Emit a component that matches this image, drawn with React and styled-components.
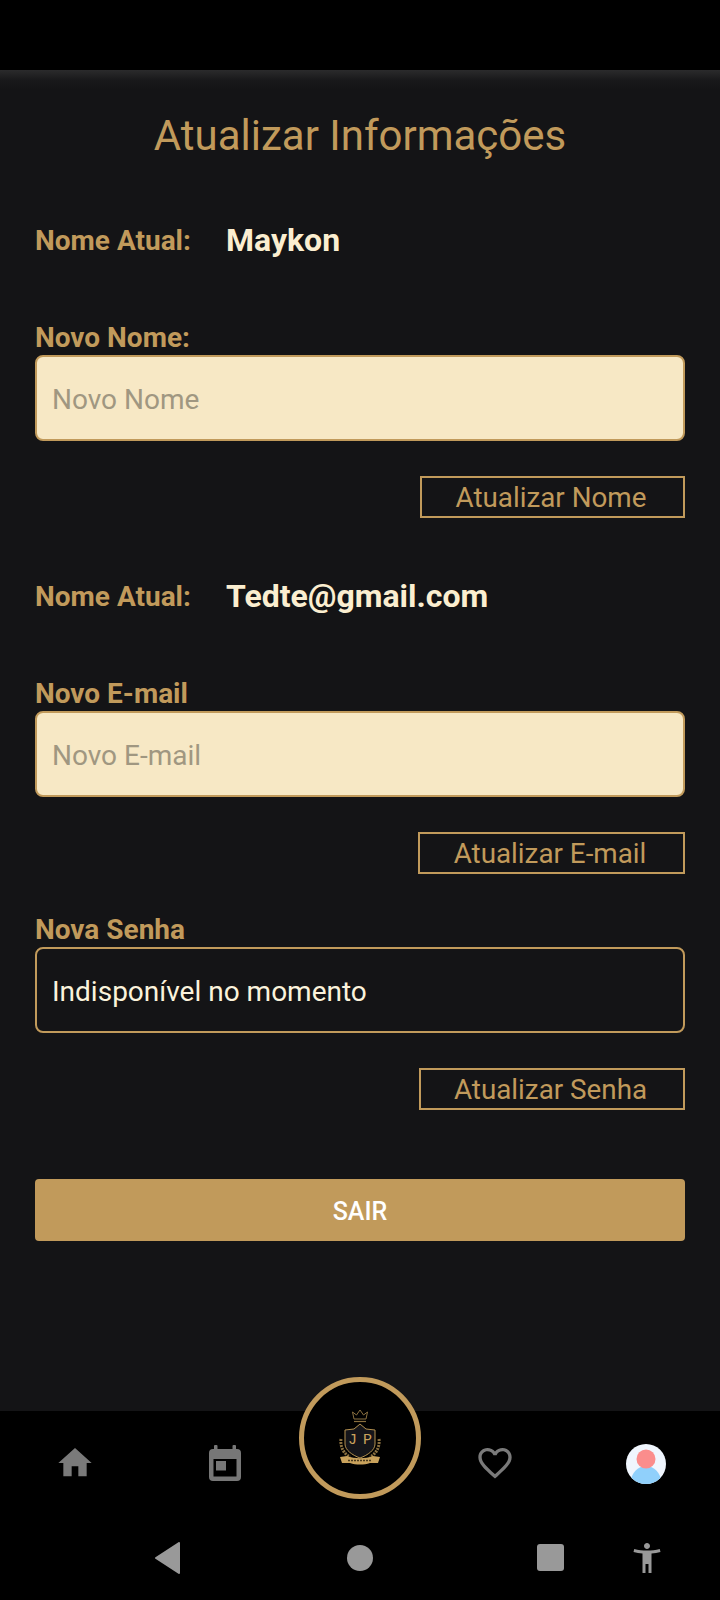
import React from "react";
import styled, { createGlobalStyle } from "styled-components";
import { MdHome, MdFavoriteBorder, MdAccessibilityNew } from "react-icons/md";

const GOLD = "#c19a5b";

export default function App() {
  return (
    <>
      <GlobalStyle />
      <Screen>
        <StatusBar />
        <Content>
          <Title>Atualizar Informações</Title>

          <CurrentRow>
            <CurrentLabel>Nome Atual:</CurrentLabel>
            <CurrentValue>Maykon</CurrentValue>
          </CurrentRow>
          <FieldLabel $top={61}>Novo Nome:</FieldLabel>
          <Input placeholder="Novo Nome" />
          <ButtonRow>
            <OutlineButton $width={265}>Atualizar Nome</OutlineButton>
          </ButtonRow>

          <CurrentRow $top={58}>
            <CurrentLabel>Nome Atual:</CurrentLabel>
            <CurrentValue>Tedte@gmail.com</CurrentValue>
          </CurrentRow>
          <FieldLabel $top={61}>Novo E-mail</FieldLabel>
          <Input placeholder="Novo E-mail" />
          <ButtonRow>
            <OutlineButton $width={267}>Atualizar E-mail</OutlineButton>
          </ButtonRow>

          <FieldLabel $top={39}>Nova Senha</FieldLabel>
          <Input $dark defaultValue="Indisponível no momento" readOnly />
          <ButtonRow>
            <OutlineButton $width={266}>Atualizar Senha</OutlineButton>
          </ButtonRow>

          <LogoutButton>SAIR</LogoutButton>
        </Content>

        <TabBar>
          <Tab>
            <MdHome size={40} />
          </Tab>
          <Tab>
            <CalendarIcon />
          </Tab>
          <CenterBadge>
            <Crest />
          </CenterBadge>
          <Tab>
            <MdFavoriteBorder size={40} />
          </Tab>
          <AvatarTab>
            <Avatar />
          </AvatarTab>
        </TabBar>

        <SystemBar>
          <BackKey viewBox="0 0 26 32">
            <path d="M25 1 L25 31 L2 16 Z" fill="#999" stroke="#999" strokeWidth="2" strokeLinejoin="round" />
          </BackKey>
          <HomeDot />
          <SquareKey />
          <AccessIcon>
            <MdAccessibilityNew size={36} />
          </AccessIcon>
        </SystemBar>
      </Screen>
    </>
  );
}

function CalendarIcon() {
  return (
    <svg width="32" height="36" viewBox="0 0 32 36" fill="#777">
      <rect x="5" y="0" width="3.5" height="6" rx="1" />
      <rect x="23.5" y="0" width="3.5" height="6" rx="1" />
      <path
        fillRule="evenodd"
        d="M4 4 H28 A4 4 0 0 1 32 8 V32 A4 4 0 0 1 28 36 H4 A4 4 0 0 1 0 32 V8 A4 4 0 0 1 4 4 Z M4.5 14 V31.5 H27.5 V14 Z"
      />
      <rect x="7" y="16" width="10" height="9.5" />
    </svg>
  );
}

function Crest() {
  return (
    <svg width="46" height="58" viewBox="0 0 46 58">
      <path d="M17 10 L15.5 3 L19.5 6 L23 1 L26.5 6 L30.5 3 L29 10 Z" fill="none" stroke="#8a7040" strokeWidth="1" />
      <path d="M17 12.5 H29" stroke="#8a7040" strokeWidth="1.2" />
      <path d="M4 30 C3 38 7 45 13 48 M42 30 C43 38 39 45 33 48" fill="none" stroke="#8a7040" strokeWidth="3" strokeDasharray="2 1" />
      <path d="M23 15 L29 20 L38 21 V35 C38 41 31 46 23 49 C15 46 8 41 8 35 V21 L17 20 Z" fill="#15151a" stroke="#b3904f" strokeWidth="1" />
      <path d="M3 48 L10 47 C18 50 28 50 36 47 L43 48 L41 54 L33 54 C27 56 19 56 13 54 L5 54 Z" fill="#c9a25c" />
      <path d="M11 51.5 H35" stroke="#4a3a1c" strokeWidth="1.5" strokeDasharray="2 1" />
      <text x="15.5" y="35" fontSize="15" fill="#c9a25c" textAnchor="middle" fontFamily="Liberation Mono, monospace">J</text>
      <text x="30.5" y="35" fontSize="15" fill="#c9a25c" textAnchor="middle" fontFamily="Liberation Mono, monospace">P</text>
    </svg>
  );
}

function Avatar() {
  return (
    <svg width="40" height="40" viewBox="0 0 40 40">
      <defs>
        <clipPath id="avatarClip">
          <circle cx="20" cy="20" r="20" />
        </clipPath>
      </defs>
      <circle cx="20" cy="20" r="20" fill="#f0f6fe" />
      <g clipPath="url(#avatarClip)">
        <ellipse cx="20" cy="38" rx="15" ry="16" fill="#90d0fb" />
        <circle cx="20" cy="15" r="9.5" fill="#fb8d8c" />
      </g>
    </svg>
  );
}

const GlobalStyle = createGlobalStyle`
  html, body {
    margin: 0;
    padding: 0;
    background: #000;
  }
  * {
    box-sizing: border-box;
  }
`;

const Screen = styled.div`
  width: 720px;
  height: 1600px;
  display: flex;
  flex-direction: column;
  font-family: Roboto, "Liberation Sans", sans-serif;
  background: #000;
`;

const StatusBar = styled.div`
  height: 70px;
  background: #000;
  flex-shrink: 0;
`;

const Content = styled.div`
  height: 1341px;
  background: linear-gradient(#2b2b2c, #19191b 10px, #141416 20px);
  padding: 42px 35px 0;
  display: flex;
  flex-direction: column;
`;

const Title = styled.h1`
  margin: 0;
  text-align: center;
  color: ${GOLD};
  font-size: 42px;
  font-weight: 400;
  line-height: 48px;
`;

const CurrentRow = styled.div`
  display: flex;
  align-items: center;
  margin-top: ${(p) => p.$top ?? 60}px;
  height: 40px;
`;

const CurrentLabel = styled.span`
  width: 191px;
  color: ${GOLD};
  font-size: 28px;
  font-weight: 700;
  white-space: nowrap;
`;

const CurrentValue = styled.span`
  color: #fbeed0;
  font-size: 32px;
  font-weight: 700;
`;

const FieldLabel = styled.label`
  margin-top: ${(p) => p.$top}px;
  color: ${GOLD};
  font-size: 28px;
  font-weight: 700;
  line-height: 34px;
`;

const Input = styled.input`
  width: 100%;
  height: 86px;
  padding: 3px 15px 0;
  border: 2px solid ${GOLD};
  border-radius: 8px;
  outline: none;
  background: ${(p) => (p.$dark ? "transparent" : "#f7e8c5")};
  color: #fbf3dc;
  font-family: inherit;
  font-size: 28px;

  &::placeholder {
    color: #a09781;
    opacity: 1;
  }
`;

const ButtonRow = styled.div`
  display: flex;
  justify-content: flex-end;
  margin-top: 35px;
`;

const OutlineButton = styled.button`
  width: ${(p) => p.$width}px;
  height: 42px;
  padding: 0 3px 0 0;
  border: 2px solid ${GOLD};
  background: transparent;
  color: ${GOLD};
  font-family: inherit;
  font-size: 27.8px;
`;

const LogoutButton = styled.button`
  width: 100%;
  height: 62px;
  margin-top: 69px;
  padding: 2px 0 0;
  border: none;
  border-radius: 4px;
  background: ${GOLD};
  color: #fff;
  font-family: inherit;
  font-size: 25px;
  font-weight: 500;
`;

const TabBar = styled.nav`
  height: 104px;
  display: grid;
  grid-template-columns: 150px 150px 120px 150px 1fr;
  align-items: center;
  background: #000;
  flex-shrink: 0;
`;

const Tab = styled.div`
  display: flex;
  justify-content: center;
  color: #7a7a7a;
`;

const AvatarTab = styled(Tab)`
  padding: 2px 0 0 2px;
`;

const CenterBadge = styled.div`
  width: 122px;
  height: 122px;
  margin-top: -50px;
  justify-self: center;
  display: flex;
  align-items: center;
  justify-content: center;
  border: 5px solid ${GOLD};
  border-radius: 50%;
  background: #000;
  z-index: 1;
`;

const SystemBar = styled.div`
  flex: 1;
  display: flex;
  align-items: center;
  padding-left: 154px;
  background: #000;
`;

const BackKey = styled.svg`
  width: 26px;
  height: 32px;
`;

const HomeDot = styled.div`
  width: 26px;
  height: 26px;
  margin-left: 167px;
  border-radius: 50%;
  background: #999;
`;

const SquareKey = styled.div`
  width: 27px;
  height: 27px;
  margin-left: 164px;
  border-radius: 3px;
  background: #999;
`;

const AccessIcon = styled.div`
  display: flex;
  margin-left: 65px;
  color: #999;
`;
